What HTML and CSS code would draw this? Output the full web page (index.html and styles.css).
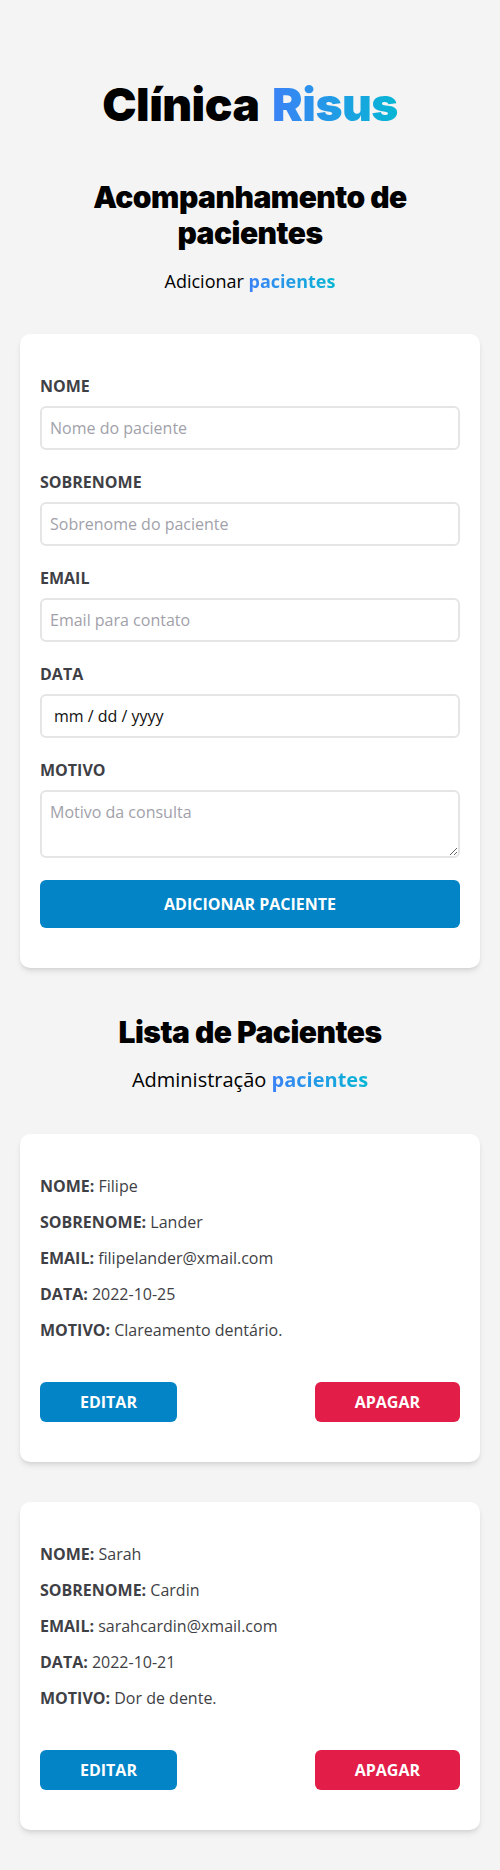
FILE: index.html
```html
<!DOCTYPE html>
<html lang="pt-BR">
<head>
<meta charset="utf-8">
<title>Clínica Risus</title>
<link rel="stylesheet" href="styles.css">
</head>
<body>
<main class="page">
  <header class="hero">
    <h1 class="brand">Clínica <span class="grad">Risus</span></h1>
  </header>

  <section class="section">
    <h2 class="section-title">Acompanhamento de pacientes</h2>
    <p class="section-sub sub-lg">Adicionar <span class="grad strong">pacientes</span></p>

    <form class="card form">
      <div class="field">
        <label class="label" for="nome">Nome</label>
        <input class="input" id="nome" type="text" placeholder="Nome do paciente">
      </div>
      <div class="field">
        <label class="label" for="sobrenome">Sobrenome</label>
        <input class="input" id="sobrenome" type="text" placeholder="Sobrenome do paciente">
      </div>
      <div class="field">
        <label class="label" for="email">Email</label>
        <input class="input" id="email" type="email" placeholder="Email para contato">
      </div>
      <div class="field">
        <label class="label" for="data">Data</label>
        <input class="input input-date" id="data" type="text" placeholder="mm / dd / yyyy">
      </div>
      <div class="field">
        <label class="label" for="motivo">Motivo</label>
        <textarea class="input textarea" id="motivo" placeholder="Motivo da consulta"></textarea>
      </div>
      <button class="btn btn-primary btn-block" type="button">Adicionar paciente</button>
    </form>
  </section>

  <section class="section list">
    <h2 class="section-title">Lista de Pacientes</h2>
    <p class="section-sub sub-xl">Administração <span class="grad strong">pacientes</span></p>

    <article class="card patient">
      <p class="row"><span class="key">Nome:</span> Filipe</p>
      <p class="row"><span class="key">Sobrenome:</span> Lander</p>
      <p class="row"><span class="key">Email:</span> filipelander@xmail.com</p>
      <p class="row"><span class="key">Data:</span> 2022-10-25</p>
      <p class="row"><span class="key">Motivo:</span> Clareamento dentário.</p>
      <div class="actions">
        <button class="btn btn-primary" type="button">Editar</button>
        <button class="btn btn-danger" type="button">Apagar</button>
      </div>
    </article>

    <article class="card patient">
      <p class="row"><span class="key">Nome:</span> Sarah</p>
      <p class="row"><span class="key">Sobrenome:</span> Cardin</p>
      <p class="row"><span class="key">Email:</span> sarahcardin@xmail.com</p>
      <p class="row"><span class="key">Data:</span> 2022-10-21</p>
      <p class="row"><span class="key">Motivo:</span> Dor de dente.</p>
      <div class="actions">
        <button class="btn btn-primary" type="button">Editar</button>
        <button class="btn btn-danger" type="button">Apagar</button>
      </div>
    </article>
  </section>
</main>
</body>
</html>
```

FILE: styles.css
```css
* { box-sizing: border-box; }

html, body {
  margin: 0;
  padding: 0;
}

body {
  background: #f4f4f4;
  font-family: "Open Sans", "Noto Sans", sans-serif;
  color: #000;
}

.page {
  padding: 80px 20px 40px;
}

.hero {
  text-align: center;
}

.brand {
  margin: 0;
  font-family: "Inter", "DejaVu Sans", sans-serif;
  font-weight: 900;
  font-size: 46px;
  line-height: 48px;
  letter-spacing: -0.5px;
  word-spacing: 4px;
}

.grad {
  background: linear-gradient(90deg, #3b82f6, #06b6d4);
  -webkit-background-clip: text;
  background-clip: text;
  color: transparent;
}

.strong { font-weight: 700; }

.section {
  display: flex;
  flex-direction: column;
}

.section-title {
  margin: 51px auto 0;
  max-width: 340px;
  text-align: center;
  font-family: "Inter", "DejaVu Sans", sans-serif;
  font-weight: 900;
  font-size: 30px;
  line-height: 36px;
  letter-spacing: -0.5px;
}

.list .section-title { margin-top: 46px; }

.section-sub {
  margin: 16px 0 0;
  text-align: center;
}

.sub-lg { font-size: 18px; line-height: 28px; }
.sub-xl { font-size: 20px; line-height: 28px; }

.card {
  background: #fff;
  border-radius: 10px;
  box-shadow: 0 4px 6px -1px rgba(0,0,0,0.1), 0 2px 4px -2px rgba(0,0,0,0.1);
  padding: 40px 20px;
  margin-top: 40px;
}

.form {
  display: flex;
  flex-direction: column;
  gap: 20px;
  margin-top: 39px;
}

.field {
  display: flex;
  flex-direction: column;
  gap: 8px;
}

.label {
  font-size: 16px;
  line-height: 24px;
  font-weight: 700;
  text-transform: uppercase;
  color: #3f3f46;
}

.input {
  display: block;
  width: 100%;
  height: 44px;
  border: 2px solid #e5e5e5;
  border-radius: 6px;
  padding: 0 8px;
  font-family: inherit;
  font-size: 16px;
  color: #18181b;
  background: #fff;
  outline: none;
}

.input::placeholder { color: #a1a1aa; }

.input-date { padding-left: 12px; }
.input-date::placeholder { color: #111; }

.textarea {
  height: 68px;
  padding: 8px;
  resize: vertical;
  line-height: 24px;
}

.btn {
  border: 0;
  border-radius: 6px;
  color: #fff;
  font-family: inherit;
  font-weight: 700;
  font-size: 16px;
  text-transform: uppercase;
  height: 40px;
  padding: 0 40px;
  cursor: pointer;
}

.btn-primary { background: #0284c7; }
.btn-danger { background: #e11d48; }

.btn-block {
  width: 100%;
  height: 48px;
  margin-top: 2px;
}

.patient {
  display: flex;
  flex-direction: column;
  gap: 12px;
}

.row {
  margin: 0;
  font-size: 16px;
  line-height: 24px;
  color: #3f3f46;
}

.key {
  font-weight: 700;
  text-transform: uppercase;
}

.actions {
  display: flex;
  justify-content: space-between;
  margin-top: 28px;
}
```
